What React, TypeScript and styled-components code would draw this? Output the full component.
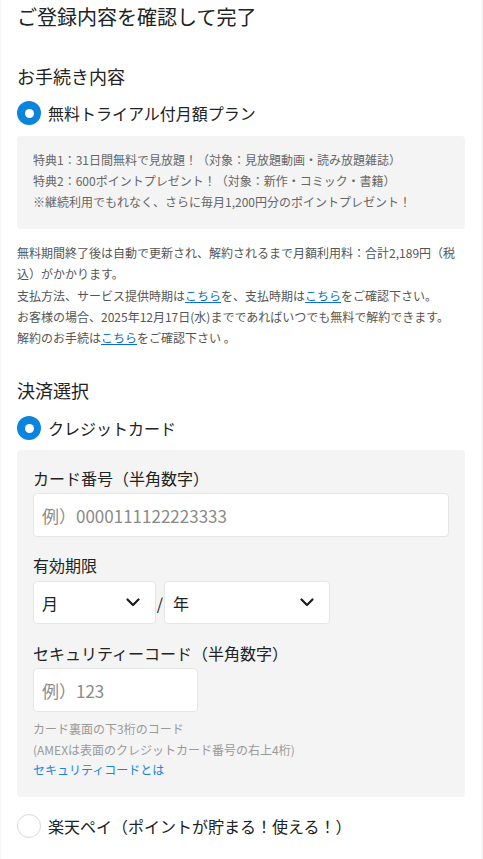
import React from "react";
import styled, { createGlobalStyle } from "styled-components";

const Global = createGlobalStyle`
  html, body { margin: 0; padding: 0; background: #f7f7f7; }
  body { font-family: "Noto Sans CJK JP", "Noto Sans", sans-serif; color: #222; }
  * { box-sizing: border-box; }
`;

const Page = styled.div`
  width: 480px;
  margin-left: 1px;
  background: #fff;
  padding: 0 16px 20px;
  min-height: 859px;
`;

const Title = styled.h1`
  margin: 0;
  font-size: 20px;
  font-weight: 400;
  line-height: 34px;
  color: #222;
`;

const SectionHeading = styled.h2<{ $top: number }>`
  margin: ${(p) => p.$top}px 0 0;
  font-size: 18px;
  font-weight: 400;
  line-height: 26px;
  color: #222;
`;

const RadioRow = styled.label<{ $top: number }>`
  display: flex;
  align-items: center;
  gap: 7px;
  margin-top: ${(p) => p.$top}px;
  height: 24px;
  font-size: 16px;
  color: #222;
`;

const RadioDot = styled.span<{ $checked?: boolean }>`
  width: 24px;
  height: 24px;
  border-radius: 50%;
  flex: none;
  background: ${(p) => (p.$checked ? "#0b84de" : "#fff")};
  border: ${(p) => (p.$checked ? "none" : "1px solid #d9d9d9")};
  display: flex;
  align-items: center;
  justify-content: center;
  &::after {
    content: "";
    display: ${(p) => (p.$checked ? "block" : "none")};
    width: 9px;
    height: 9px;
    border-radius: 50%;
    background: #fff;
  }
`;

const GrayBox = styled.div<{ $top: number }>`
  margin-top: ${(p) => p.$top}px;
  background: #f4f4f4;
  border-radius: 4px;
`;

const BenefitBox = styled(GrayBox)`
  padding: 13px 16px 17px;
  font-size: 12px;
  line-height: 21px;
  color: #666;
`;

const Line = styled.div``;

const Notice = styled.p`
  margin: 13px 0 0;
  font-size: 12px;
  line-height: 21.25px;
  color: #555;
`;

const Link = styled.a`
  color: #0a6fd0;
  text-decoration: underline;
`;

const CardBox = styled(GrayBox)`
  padding: 16px 16px 16px;
`;

const FieldLabel = styled.div<{ $top?: number }>`
  margin-top: ${(p) => p.$top ?? 0}px;
  font-size: 16px;
  line-height: 24px;
  color: #222;
`;

const TextInput = styled.div<{ $width: number }>`
  margin-top: 3px;
  width: ${(p) => p.$width}px;
  height: 44px;
  background: #fff;
  border: 1px solid #e6e6e6;
  border-radius: 4px;
  display: flex;
  align-items: center;
  padding: 0 8px;
  font-size: 17px;
  color: #8a8a8a;
`;

const ExpiryRow = styled.div`
  margin-top: 4px;
  display: flex;
  align-items: center;
`;

const Select = styled.div<{ $width: number }>`
  width: ${(p) => p.$width}px;
  height: 43px;
  background: #fff;
  border: 1px solid #e6e6e6;
  border-radius: 4px;
  display: flex;
  align-items: center;
  justify-content: space-between;
  padding: 0 15px 0 8px;
  font-size: 16px;
  color: #222;
`;

const Slash = styled.span`
  width: 8px;
  text-align: center;
  font-size: 16px;
  color: #222;
`;

const Help = styled.div`
  margin-top: 7px;
  font-size: 12px;
  line-height: 20.5px;
  color: #999;
`;

const HelpLink = styled.a`
  display: block;
  color: #1a84dc;
  text-decoration: none;
`;

const Chevron = () => (
  <svg width="14" height="9" viewBox="0 0 14 9" fill="none">
    <path d="M1.5 1.5 L7 7 L12.5 1.5" stroke="#1d1d1d" strokeWidth="2.2" strokeLinecap="round" strokeLinejoin="round" />
  </svg>
);

export default function App() {
  return (
    <>
      <Global />
      <Page>
        <Title>ご登録内容を確認して完了</Title>

        <SectionHeading $top={29}>お手続き内容</SectionHeading>
        <RadioRow $top={12}>
          <RadioDot $checked />
          無料トライアル付月額プラン
        </RadioRow>
        <BenefitBox $top={11}>
          <Line>特典1：31日間無料で見放題！（対象：見放題動画・読み放題雑誌）</Line>
          <Line>特典2：600ポイントプレゼント！（対象：新作・コミック・書籍）</Line>
          <Line>※継続利用でもれなく、さらに毎月1,200円分のポイントプレゼント！</Line>
        </BenefitBox>

        <Notice>
          無料期間終了後は自動で更新され、解約されるまで月額利用料：合計2,189円（税込）がかかります。
          <br />
          支払方法、サービス提供時期は<Link>こちら</Link>を、支払時期は<Link>こちら</Link>をご確認下さい。
          <br />
          お客様の場合、2025年12月17日(水)までであればいつでも無料で解約できます。
          <br />
          解約のお手続は<Link>こちら</Link>をご確認下さい 。
        </Notice>

        <SectionHeading $top={29}>決済選択</SectionHeading>
        <RadioRow $top={13}>
          <RadioDot $checked />
          クレジットカード
        </RadioRow>
        <CardBox $top={10}>
          <FieldLabel>カード番号（半角数字）</FieldLabel>
          <TextInput $width={416}>例）0000111122223333</TextInput>

          <FieldLabel $top={16}>有効期限</FieldLabel>
          <ExpiryRow>
            <Select $width={123}>
              <span>月</span>
              <Chevron />
            </Select>
            <Slash>/</Slash>
            <Select $width={166}>
              <span>年</span>
              <Chevron />
            </Select>
          </ExpiryRow>

          <FieldLabel $top={17}>セキュリティーコード（半角数字）</FieldLabel>
          <TextInput $width={165}>例）123</TextInput>
          <Help>
            <div>カード裏面の下3桁のコード</div>
            <div>(AMEXは表面のクレジットカード番号の右上4桁)</div>
            <HelpLink>セキュリティコードとは</HelpLink>
          </Help>
        </CardBox>

        <RadioRow $top={17}>
          <RadioDot />
          楽天ペイ（ポイントが貯まる！使える！）
        </RadioRow>
      </Page>
    </>
  );
}
